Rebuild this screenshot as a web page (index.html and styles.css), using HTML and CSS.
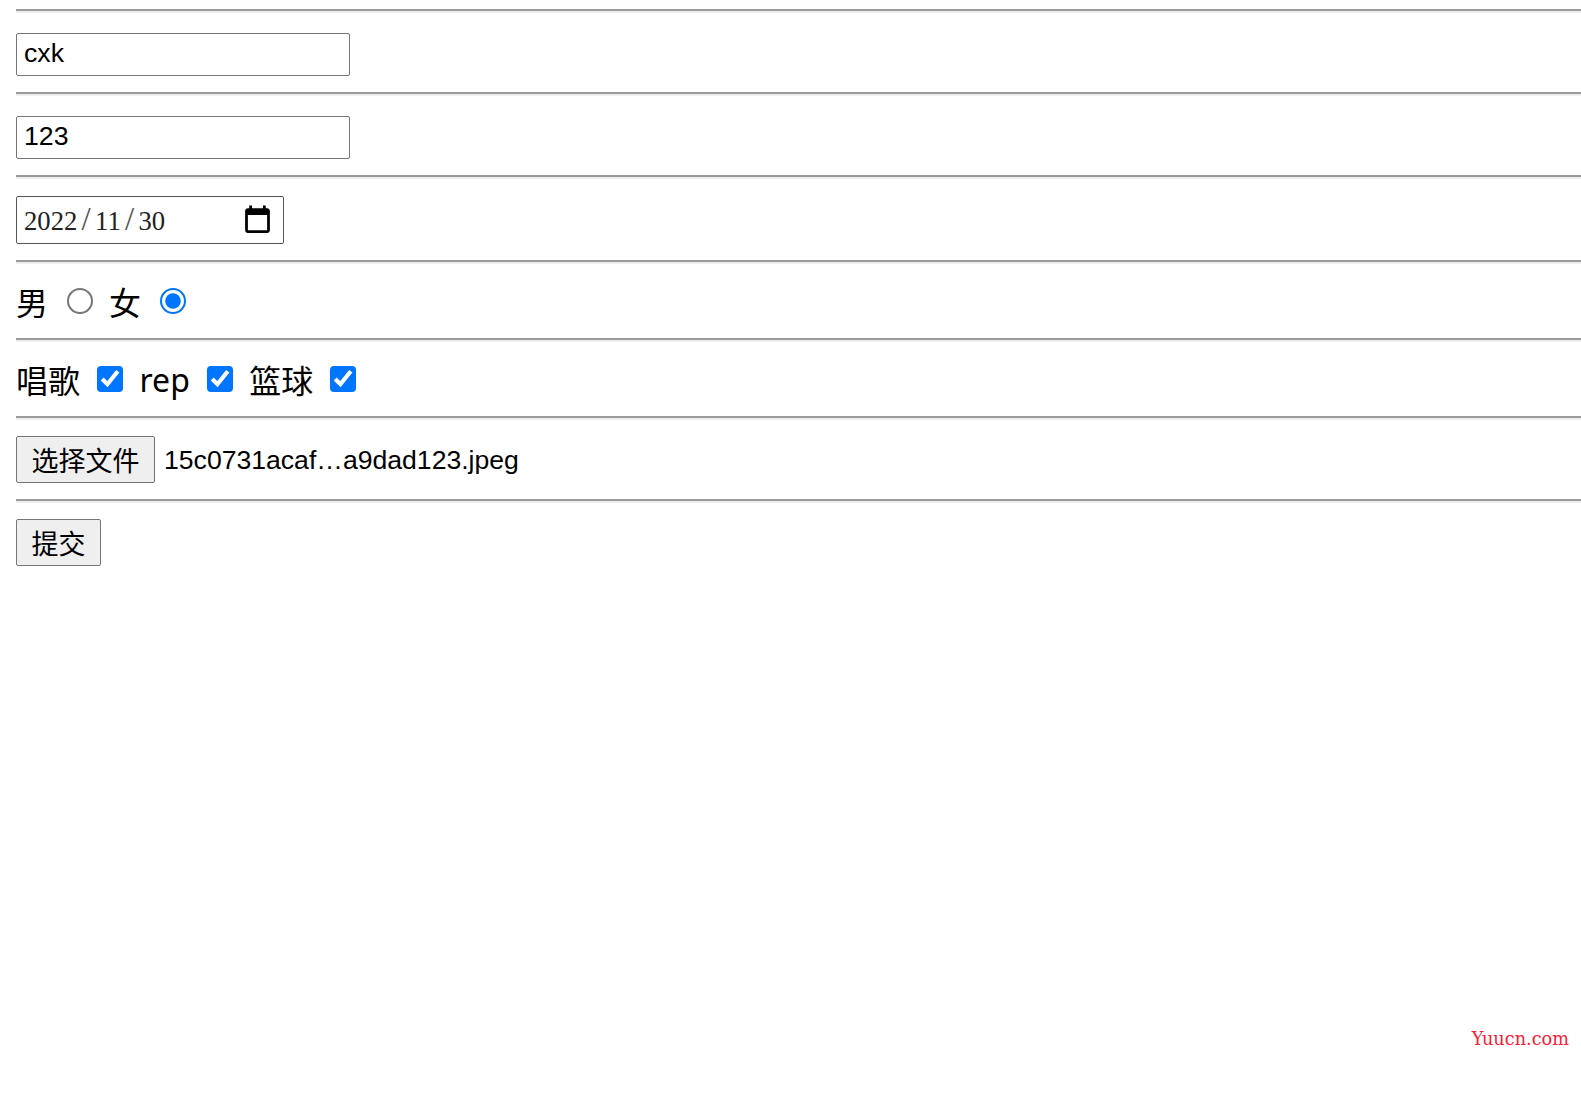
FILE: index.html
```html
<!DOCTYPE html>
<html>
<head>
    <title>Form</title>
    <link rel="stylesheet" href="styles.css">
</head>
<body>
    <form class="form">
        <hr>
        <div class="row row-text"><input class="text-input" type="text" value="cxk"></div>
        <hr>
        <div class="row row-text"><input class="text-input" type="text" value="123"></div>
        <hr>
        <div class="row row-date">
            <div class="date-box">
                <span class="date-value">2022<span class="date-sep">/</span>11<span class="date-sep">/</span>30</span>
                <svg class="date-icon" viewBox="0 0 24 24"><path d="M19 3h-1V1h-2v2H8V1H6v2H5c-1.1 0-2 .9-2 2v14c0 1.1.9 2 2 2h14c1.1 0 2-.9 2-2V5c0-1.1-.9-2-2-2zm0 16H5V8h14v11z"/></svg>
            </div>
        </div>
        <hr>
        <div class="row row-choice">
            <label>男</label><input class="radio" type="radio" name="sex">
            <label>女</label><input class="radio" type="radio" name="sex" checked>
        </div>
        <hr>
        <div class="row row-choice">
            <label>唱歌</label><input class="check" type="checkbox" checked>
            <label>rep</label><input class="check" type="checkbox" checked>
            <label>篮球</label><input class="check" type="checkbox" checked>
        </div>
        <hr>
        <div class="row row-file">
            <button type="button" class="btn">选择文件</button>
            <span class="file-name">15c0731acaf…a9dad123.jpeg</span>
        </div>
        <hr>
        <div class="row row-file"><button type="button" class="btn">提交</button></div>
    </form>
    <div class="watermark">Yuucn.com</div>
</body>
</html>
```

FILE: styles.css
```css
html, body {
    height: 100%;
}

body {
    margin: 0;
    padding: 9px 0 0 16px;
    box-sizing: border-box;
    background-color: #ffffff;
    color: #000000;
    font-family: "Liberation Sans", "Noto Sans CJK SC", sans-serif;
    font-size: 26.6px;
    position: relative;
    overflow: hidden;
}

hr {
    margin: 0;
    height: 4px;
    border: none;
    border-top: 2px solid #9a9a9a;
    border-bottom: 2px solid #eeeeee;
    box-sizing: border-box;
}

.row {
    display: flex;
    box-sizing: border-box;
}

.row-text {
    height: 79px;
    padding-top: 20px;
    align-items: flex-start;
}

.row-date {
    height: 81px;
    padding-top: 17px;
    align-items: flex-start;
}

.row-choice {
    height: 74px;
    align-items: center;
}

.row-file {
    height: 79px;
    padding-top: 16px;
    align-items: flex-start;
}

.text-input {
    width: 334px;
    height: 43px;
    box-sizing: border-box;
    padding: 0 7px 2px;
    border: 1px solid #767676;
    border-radius: 2px;
    font-family: "Liberation Sans", sans-serif;
    font-size: 26.67px;
}

.date-box {
    width: 268px;
    height: 48px;
    box-sizing: border-box;
    padding: 0 9px 0 7px;
    border: 1px solid #555555;
    border-radius: 2px;
    display: flex;
    align-items: center;
    justify-content: space-between;
}

.date-value {
    font-family: "Liberation Serif", serif;
    font-size: 26.67px;
    color: #222222;
}

.date-sep {
    margin: 0 4.3px;
    font-size: 33px;
    line-height: 1;
    color: #555555;
}

.date-icon {
    width: 33px;
    height: 33px;
}

.row-choice label {
    font-family: "Noto Sans", "Noto Sans CJK SC", sans-serif;
    font-size: 32px;
    margin-right: 17px;
}

/* 13px native controls, zoomed so the border and tick scale with them */
.radio, .check {
    zoom: 2;
    margin: 0 8px 0 0;
}

.radio {
    margin-left: 1px;
}

.check {
    margin-right: 8.25px;
}

.btn {
    height: 47px;
    padding: 0 14.5px;
    background-color: #efefef;
    border: 1px solid #767676;
    border-radius: 2px;
    font-family: "Noto Sans CJK SC", sans-serif;
    font-size: 27px;
    color: #000000;
}

.file-name {
    margin-left: 9px;
    line-height: 49px;
}

.watermark {
    position: absolute;
    right: 12px;
    top: 1029px;
    font-family: "DejaVu Serif", serif;
    font-size: 17.7px;
    color: #ff1a38;
}
```
